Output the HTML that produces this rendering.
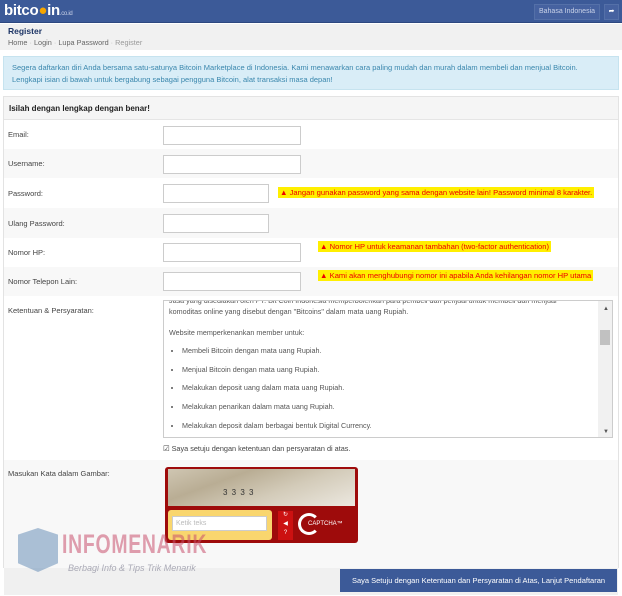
<!DOCTYPE html>
<html><head><meta charset="utf-8"><style>
*{box-sizing:border-box;margin:0;padding:0}
body{width:622px;height:596px;overflow:hidden;background:#fff;font-family:"Liberation Sans",Arial,sans-serif;font-size:8px;color:#333;position:relative}
.a{position:absolute}
.hdr{left:0;top:0;width:622px;height:23px;background:#3c5a98;border-bottom:1px solid #2d4880}
.logo{left:4px;top:2px;color:#fff;font-weight:bold;font-size:15px;letter-spacing:-0.3px}
.logo i{font-style:normal;color:#f7a600}
.logo small{font-size:6px;font-weight:normal;color:#c8d0e6}
.btn{top:4px;height:16px;border:1px solid #5470a8;background:#4662a0;color:#c9d2e8;font-size:7px;line-height:14px;text-align:center}
.bc{left:0;top:24px;width:622px;height:26px;background:#f1f1f1}
.info{left:3px;top:56px;width:616px;height:34px;background:#d9edf7;border:1px solid #c6e3ef;color:#3a87ad;font-size:7.5px;line-height:12px;padding:5px 8px}
.panel{left:3px;top:96px;width:616px;height:472px;border:1px solid #e3e3e3}
.ph{left:4px;top:97px;width:614px;height:23px;background:#f5f5f5;border-bottom:1px solid #e5e5e5;font-weight:bold;font-size:8px;color:#222;padding:7px 5px}
.row{left:4px;width:614px}
.g{background:#f8f8f8}
.lbl{left:8px;font-size:7.5px;color:#444}
.in{left:163px;height:19px;border:1px solid #ccc;background:#fff}
.warn{background:#ffef00;color:#e00;font-size:7.6px;height:11px;line-height:11px;padding:0 2px;white-space:nowrap}
.ta{left:163px;top:300px;width:450px;height:138px;border:1px solid #ccc;background:#fff;overflow:hidden;font-size:7.2px;color:#555;line-height:11px}
.ta p{padding-left:5px;white-space:nowrap}
.ta li{margin-left:18px;margin-bottom:7.7px}
.foot{left:4px;top:568px;width:614px;height:27px;background:#f0f0f0}
.sub{left:340px;top:569px;width:277px;height:23px;background:#3c5a98;color:#fff;font-size:7.5px;line-height:23px;text-align:center}
</style></head><body>
<div class="a hdr"></div>
<div class="a logo">bitco<i>●</i>in<small>.co.id</small></div>
<div class="a btn" style="left:534px;width:66px">Bahasa Indonesia</div>
<div class="a btn" style="left:604px;width:15px;color:#fff">➦</div>
<div class="a bc"></div>
<div class="a" style="left:8px;top:26px;font-weight:bold;font-size:8.5px;color:#1d3566">Register</div>
<div class="a" style="left:8px;top:38px;font-size:7.3px;color:#666">Home <span style="color:#bbb">·</span> Login <span style="color:#bbb">·</span> Lupa Password <span style="color:#bbb">·</span> <span style="color:#999">Register</span></div>
<div class="a info">Segera daftarkan diri Anda bersama satu-satunya Bitcoin Marketplace di Indonesia. Kami menawarkan cara paling mudah dan murah dalam membeli dan menjual Bitcoin. Lengkapi isian di bawah untuk bergabung sebagai pengguna Bitcoin, alat transaksi masa depan!</div>
<div class="a panel"></div>
<div class="a ph">Isilah dengan lengkap dengan benar!</div>
<div class="a row g" style="top:149px;height:29px"></div>
<div class="a row g" style="top:208px;height:30px"></div>
<div class="a row g" style="top:267px;height:29px"></div>
<div class="a row g" style="top:460px;height:108px"></div>
<div class="a lbl" style="top:130px">Email:</div>
<div class="a lbl" style="top:159px">Username:</div>
<div class="a lbl" style="top:189px">Password:</div>
<div class="a lbl" style="top:219px">Ulang Password:</div>
<div class="a lbl" style="top:248px">Nomor HP:</div>
<div class="a lbl" style="top:277px">Nomor Telepon Lain:</div>
<div class="a lbl" style="top:306px">Ketentuan &amp; Persyaratan:</div>
<div class="a lbl" style="top:469px">Masukan Kata dalam Gambar:</div>
<div class="a in" style="top:126px;width:138px"></div>
<div class="a in" style="top:155px;width:138px"></div>
<div class="a in" style="top:184px;width:106px"></div>
<div class="a in" style="top:214px;width:106px"></div>
<div class="a in" style="top:243px;width:138px"></div>
<div class="a in" style="top:272px;width:138px"></div>
<div class="a warn" style="left:278px;top:187px">▲ Jangan gunakan password yang sama dengan website lain! Password minimal 8 karakter.</div>
<div class="a warn" style="left:318px;top:241px">▲ Nomor HP untuk keamanan tambahan (two-factor authentication)</div>
<div class="a warn" style="left:318px;top:270px">▲ Kami akan menghubungi nomor ini apabila Anda kehilangan nomor HP utama</div>
<div class="a ta">
<p style="margin-top:-6px">Jasa yang disediakan oleh PT. Bit Coin Indonesia memperbolehkan para pembeli dan penjual untuk membeli dan menjual<br>komoditas online yang disebut dengan "Bitcoins" dalam mata uang Rupiah.</p>
<p style="margin-top:10px;margin-bottom:7px">Website memperkenankan member untuk:</p>
<ul><li>Membeli Bitcoin dengan mata uang Rupiah.</li><li>Menjual Bitcoin dengan mata uang Rupiah.</li><li>Melakukan deposit uang dalam mata uang Rupiah.</li><li>Melakukan penarikan dalam mata uang Rupiah.</li><li>Melakukan deposit dalam berbagai bentuk Digital Currency.</li></ul>
<div class="a" style="right:0;top:0;width:14px;height:136px;background:#f1f1f1"></div>
<div class="a" style="right:2px;top:29px;width:10px;height:15px;background:#c1c1c1"></div>
<div class="a" style="right:3px;top:3px;font-size:6px;color:#555">▲</div>
<div class="a" style="right:3px;top:126px;font-size:6px;color:#555">▼</div>
</div>
<div class="a" style="left:163px;top:444px;font-size:7.3px;color:#444">☑ Saya setuju dengan ketentuan dan persyaratan di atas.</div>
<div class="a" style="left:165px;top:467px;width:193px;height:76px;background:#9e0b0b;border-radius:3px"></div>
<div class="a" style="left:168px;top:469px;width:187px;height:37px;background:linear-gradient(160deg,#cfc6b2 0%,#b9ad94 30%,#d3cbb9 60%,#ece8e0 100%)"></div>
<div class="a" style="left:223px;top:488px;font-size:8px;color:#333;letter-spacing:1px">3 3 3 3</div>
<div class="a" style="left:168px;top:510px;width:104px;height:30px;background:#f9d66e;border-radius:3px"></div>
<div class="a" style="left:172px;top:516px;width:95px;height:15px;background:#fff;border:1px solid #ccc;font-size:7px;color:#bbb;padding:3px">Ketik teks</div>
<div class="a" style="left:278px;top:511px;width:15px;height:29px;background:#c11;color:#fff;font-size:6px;text-align:center;line-height:9px">↻<br>◀<br>?</div>
<div class="a" style="left:298px;top:513px;width:22px;height:22px;border:3px solid #fff;border-right-color:transparent;border-radius:50%"></div>
<div class="a" style="left:308px;top:521px;color:#fff;font-size:6px">CAPTCHA™</div>
<div class="a foot"></div>
<div class="a" style="left:18px;top:528px;width:40px;height:44px;background:#6a8fb8;opacity:.55;clip-path:polygon(50% 0,100% 15%,100% 80%,50% 100%,0 80%,0 15%)"></div>
<div class="a" style="left:62px;top:529px;font-size:27px;font-weight:bold;color:rgba(200,80,110,.55);letter-spacing:1px;transform:scaleX(.72);transform-origin:left">INFOMENARIK</div>
<div class="a" style="left:68px;top:563px;font-size:9px;font-style:italic;color:rgba(120,120,140,.6)">Berbagi Info &amp; Tips Trik Menarik</div>
<div class="a sub">Saya Setuju dengan Ketentuan dan Persyaratan di Atas, Lanjut Pendaftaran</div>
</body></html>
